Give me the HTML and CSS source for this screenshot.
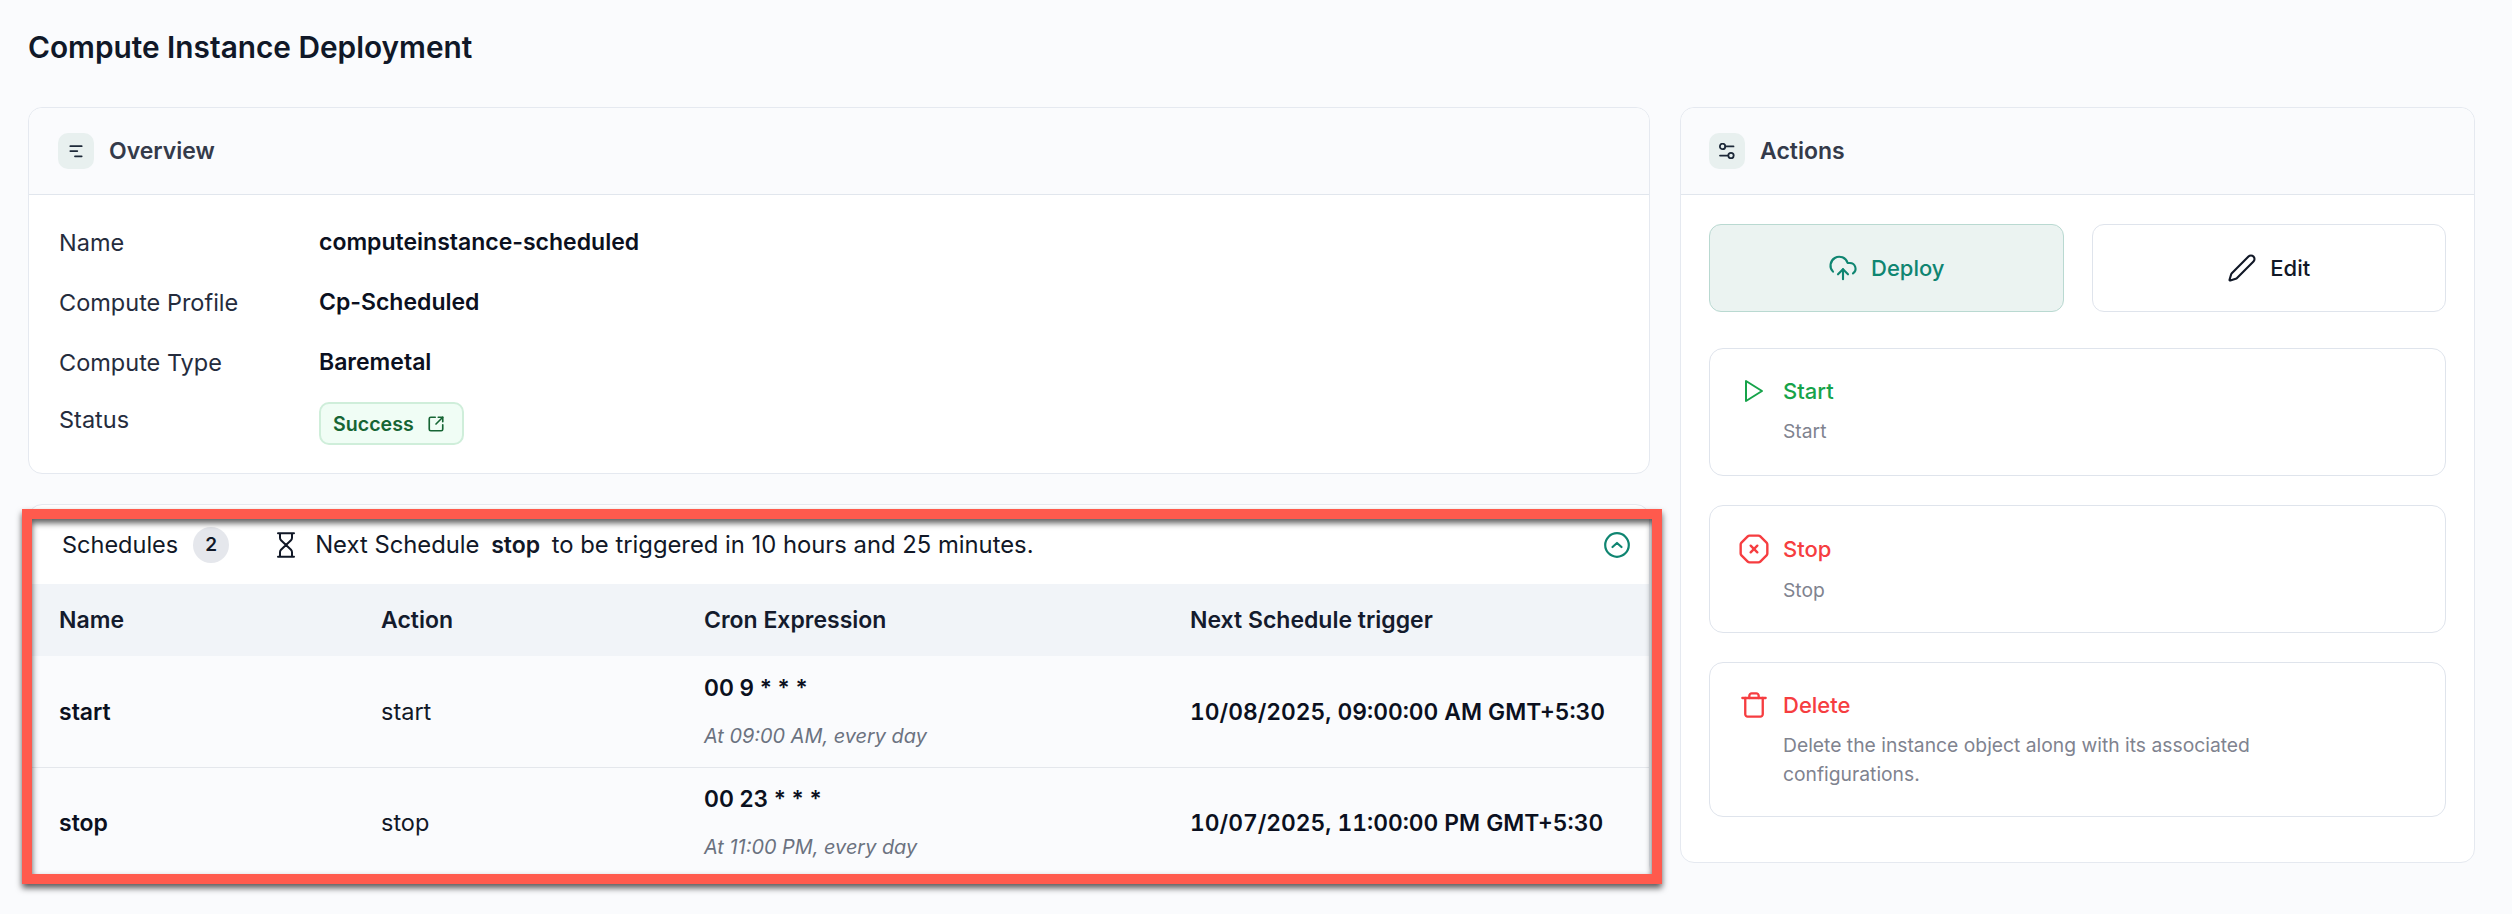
FILE: index.html
```html
<!DOCTYPE html>
<html lang="en">
<head>
<meta charset="utf-8">
<title>Compute Instance Deployment</title>
<link rel="stylesheet" href="styles.css">
</head>
<body>
<main class="page">
  <h1 class="title">Compute Instance Deployment</h1>
  <div class="layout">
    <div class="col-left">
      <section class="card overview">
        <header class="card-head">
          <span class="head-icon">
            <svg class="ico-lines" viewBox="0 0 16 16"><path d="M1.500 2.500h13M1.500 8h8M6.800 14h7.700"/></svg>
          </span>
          <h2>Overview</h2>
        </header>
        <dl class="facts">
          <dt>Name</dt><dd>computeinstance-scheduled</dd>
          <dt>Compute Profile</dt><dd>Cp-Scheduled</dd>
          <dt>Compute Type</dt><dd>Baremetal</dd>
          <dt class="status-label">Status</dt>
          <dd class="status-value">
            <span class="badge">Success
              <svg class="ico-ext" viewBox="0 0 24 24"><path d="M21 13v6a2 2 0 0 1-2 2H5a2 2 0 0 1-2-2V5a2 2 0 0 1 2-2h6"/><path d="m21 3-9 9"/><path d="M15 3h6v6"/></svg>
            </span>
          </dd>
        </dl>
      </section>

      <section class="card schedules">
        <header class="sched-head">
          <span class="sched-title">Schedules</span>
          <span class="count">2</span>
          <svg class="ico-glass" viewBox="0 0 20 26"><path d="M2 1.200h16M2 24.800h16M4 1.200v4.600c0 1 .3 1.700 1 2.400L10 13l5-4.800c.7-.7 1-1.400 1-2.400V1.200M4 24.800v-4.600c0-1 .3-1.700 1-2.400L10 13l5 4.800c.7.7 1 1.400 1 2.400v4.600"/></svg>
          <span class="next">Next Schedule <b>stop</b> to be triggered in 10 hours and 25 minutes.</span>
          <svg class="ico-chev" viewBox="0 0 26 26"><circle cx="13" cy="13" r="11.800"/><path d="m8.500 15 4.500-4 4.500 4"/></svg>
        </header>
        <div class="row row-head">
          <div>Name</div><div>Action</div><div>Cron Expression</div><div>Next Schedule trigger</div>
        </div>
        <div class="row row-body">
          <div class="strong">start</div>
          <div>start</div>
          <div class="cron"><span class="strong">00 9 * * *</span><em>At 09:00 AM, every day</em></div>
          <div class="strong date">10/08/2025, 09:00:00 AM GMT+5:30</div>
        </div>
        <div class="row row-body row-last">
          <div class="strong">stop</div>
          <div>stop</div>
          <div class="cron"><span class="strong">00 23 * * *</span><em>At 11:00 PM, every day</em></div>
          <div class="strong date">10/07/2025, 11:00:00 PM GMT+5:30</div>
        </div>
        <div class="frame"></div>
      </section>
    </div>

    <aside class="card actions">
      <header class="card-head">
        <span class="head-icon">
          <svg class="ico-head" viewBox="0 0 16 16"><circle cx="3.600" cy="3.400" r="2.700"/><path d="M6.300 3.400h8.200M1 12.600h8.200"/><circle cx="12" cy="12.600" r="2.700"/></svg>
        </span>
        <h2>Actions</h2>
      </header>
      <div class="actions-body">
        <div class="btn-row">
          <button class="btn btn-primary" type="button">
            <svg class="ico-btn" viewBox="0 0 24 24"><path d="M12 13v8"/><path d="M4 14.899A7 7 0 1 1 15.710 8h1.790a4.500 4.500 0 0 1 2.500 8.242"/><path d="m8 17 4-4 4 4"/></svg>
            Deploy
          </button>
          <button class="btn" type="button">
            <svg class="ico-btn" viewBox="0 0 24 24"><path d="M21.174 6.812a1 1 0 0 0-3.986-3.987L3.842 16.174a2 2 0 0 0-.5.83l-1.321 4.352a.5.5 0 0 0 .623.622l4.353-1.320a2 2 0 0 0 .83-.497z"/></svg>
            Edit
          </button>
        </div>
        <article class="op op-start">
          <span class="op-icon">
            <svg class="ico-play" viewBox="0 0 20 24"><path d="M2 2v20l16-10z"/></svg>
          </span>
          <h3>Start</h3>
          <p>Start</p>
        </article>
        <article class="op op-danger">
          <span class="op-icon">
            <svg class="ico-stop" viewBox="0 0 24 24"><path d="m14.500 9.500-5 5"/><path d="M2.586 16.726A2 2 0 0 1 2 15.312V8.688a2 2 0 0 1 .586-1.414l4.688-4.688A2 2 0 0 1 8.688 2h6.624a2 2 0 0 1 1.414.586l4.688 4.688A2 2 0 0 1 22 8.688v6.624a2 2 0 0 1-.586 1.414l-4.688 4.688a2 2 0 0 1-1.414.586H8.688a2 2 0 0 1-1.414-.586z"/><path d="m9.500 9.500 5 5"/></svg>
          </span>
          <h3>Stop</h3>
          <p>Stop</p>
        </article>
        <article class="op op-danger">
          <span class="op-icon">
            <svg class="ico-trash" viewBox="0 0 24 24"><path d="M2 6h20"/><path d="M19.500 6v14c0 1-1 2-2 2h-11c-1 0-2-1-2-2V6"/><path d="M8 6V4c0-1 1-2 2-2h4c1 0 2 1 2 2v2"/></svg>
          </span>
          <h3>Delete</h3>
          <p>Delete the instance object along with its associated configurations.</p>
        </article>
      </div>
    </aside>
  </div>
</main>
</body>
</html>
```

FILE: styles.css
```css
* { box-sizing: border-box; }
html, body { margin: 0; height: 100%; }
body {
  background: #fafbfd;
  font-family: Inter, "Liberation Sans", sans-serif;
  color: #111827;
  overflow: hidden;
}
svg { fill: none; stroke: currentColor; stroke-linecap: round; stroke-linejoin: round; flex: none; }
h1, h2, h3, p, dl, dd { margin: 0; }

.page { padding: 0 37px 0 28px; }
.title {
  height: 107px;
  padding-top: 29px;
  font-size: 29.800px;
  line-height: 36px;
  font-weight: 600;
  color: #101828;
}
.layout { display: grid; grid-template-columns: 1622px 795px; column-gap: 30px; align-items: start; }
.col-left { display: flex; flex-direction: column; gap: 30px; }
.card { background: #fff; border: 1px solid #e5e9f0; border-radius: 14px; }

.card-head {
  height: 87px;
  display: flex;
  align-items: center;
  gap: 15px;
  padding: 0 29px;
  background: #fafbfd;
  border-bottom: 1px solid #e1e6ed;
  border-radius: 14px 14px 0 0;
}
.actions .card-head { padding-left: 28px; }
.card-head h2 { font-size: 23px; line-height: 30px; font-weight: 600; color: #343a4a; }
.head-icon {
  width: 36px; height: 36px;
  border-radius: 10px;
  background: #e8f0ef;
  color: #1d2939;
  display: flex; align-items: center; justify-content: center;
}
.ico-head { width: 16px; height: 16px; stroke-width: 1.800; }
.ico-lines { width: 14px; height: 14px; stroke-width: 2; }

.facts {
  height: 278px;
  padding: 30px 30px 0;
  display: grid;
  grid-template-columns: 260px 1fr;
  grid-auto-rows: 35px;
  row-gap: 25px;
  font-size: 23.500px;
  line-height: 35px;
  color: #252c3d;
}
.facts dd { font-size: 23px; font-weight: 600; color: #0b1020; }
.status-label { margin-top: -3px; }
.facts .status-value { margin-top: -3px; }
.badge {
  display: inline-flex; align-items: center; gap: 13px;
  height: 43px;
  padding: 0 17px 0 12px;
  background: #f0fdf5;
  border: 2px solid #cfeeda;
  border-radius: 10px;
  font-size: 19.600px; font-weight: 600; line-height: 26px;
  color: #166534;
}
.ico-ext { width: 18px; height: 18px; stroke-width: 2.200; }

.schedules { position: relative; height: 375px; }
.sched-head {
  height: 79px;
  display: flex; align-items: center;
  padding: 0 19px 0 33px;
  font-size: 23.500px; line-height: 34px;
  color: #111827;
}
.count {
  width: 36px; height: 36px; margin-left: 15px;
  border-radius: 50%;
  background: #e5e7ec;
  display: flex; align-items: center; justify-content: center;
  font-size: 19px; font-weight: 600;
}
.ico-glass { width: 20px; height: 26px; margin-left: 47px; stroke-width: 2; }
.next { margin-left: 19px; flex: 1; font-size: 23.800px; }
.next b { font-size: 23px; font-weight: 600; margin: 0 5px; }
.ico-chev { width: 26px; height: 26px; stroke-width: 2.200; color: #0f8571; }

.row {
  display: grid;
  grid-template-columns: 322px 323px 486px 1fr;
  padding-left: 30px;
  align-items: center;
  font-size: 23.500px; line-height: 34px;
}
.row-head { height: 72px; background: #f1f4f8; font-size: 23px; font-weight: 600; color: #141b2d; }
.row-body { height: 112px; background: #fafbfd; border-bottom: 1px solid #e4e7ec; color: #111827; }
.row-last { border-bottom: 0; height: 110px; }
.strong { font-size: 23px; font-weight: 600; color: #0b1020; }
.date { font-size: 22.800px; font-variant-numeric: tabular-nums; }
.cron { display: flex; flex-direction: column; gap: 16px; margin-bottom: 2px; }
.cron .strong { font-size: 22.600px; }
.cron em { font-size: 19.900px; line-height: 30px; color: #6b7280; font-style: italic; }

.frame {
  position: absolute;
  left: -7px; top: 4px;
  width: 1640px; height: 375px;
  border: 10px solid #ff5a4d;
  filter: drop-shadow(0 4px 3px rgba(0, 0, 0, .65));
  pointer-events: none;
}

.actions { height: 756px; }
.actions-body { padding: 29px 28px 0; display: flex; flex-direction: column; gap: 29px; }
.btn-row { display: grid; grid-template-columns: 1fr 1fr; gap: 28px; margin-bottom: 7px; }
.btn {
  height: 88px;
  display: flex; align-items: center; justify-content: center; gap: 13px;
  background: #fff;
  border: 1px solid #dfe4ec;
  border-radius: 12px;
  font: 500 22px/30px Inter, "Liberation Sans", sans-serif;
  color: #111827;
}
.btn-primary { background: #ebf3f1; border-color: #b9d9d1; color: #0f8571; }
.ico-btn { width: 30px; height: 30px; stroke-width: 1.700; }

.op {
  display: grid;
  grid-template-columns: 28px 1fr;
  column-gap: 15px;
  align-items: center;
  align-content: start;
  min-height: 128px;
  padding: 27px 28px 27px 30px;
  border: 1px solid #dfe4ec;
  border-radius: 14px;
  background: #fff;
}
.op h3 { font-size: 22px; line-height: 30px; font-weight: 500; }
.op p { grid-column: 2; margin-top: 11px; font-size: 19.300px; line-height: 29px; color: #80838f; max-width: 560px; }
.op-icon { display: flex; justify-content: center; }
.op-start { color: #16a34a; }
.op-danger { color: #f63d40; }
.ico-play { width: 20px; height: 24px; stroke-width: 2; }
.ico-stop { width: 32px; height: 32px; stroke-width: 1.800; }
.ico-trash { width: 28px; height: 28px; stroke-width: 2; }
```
